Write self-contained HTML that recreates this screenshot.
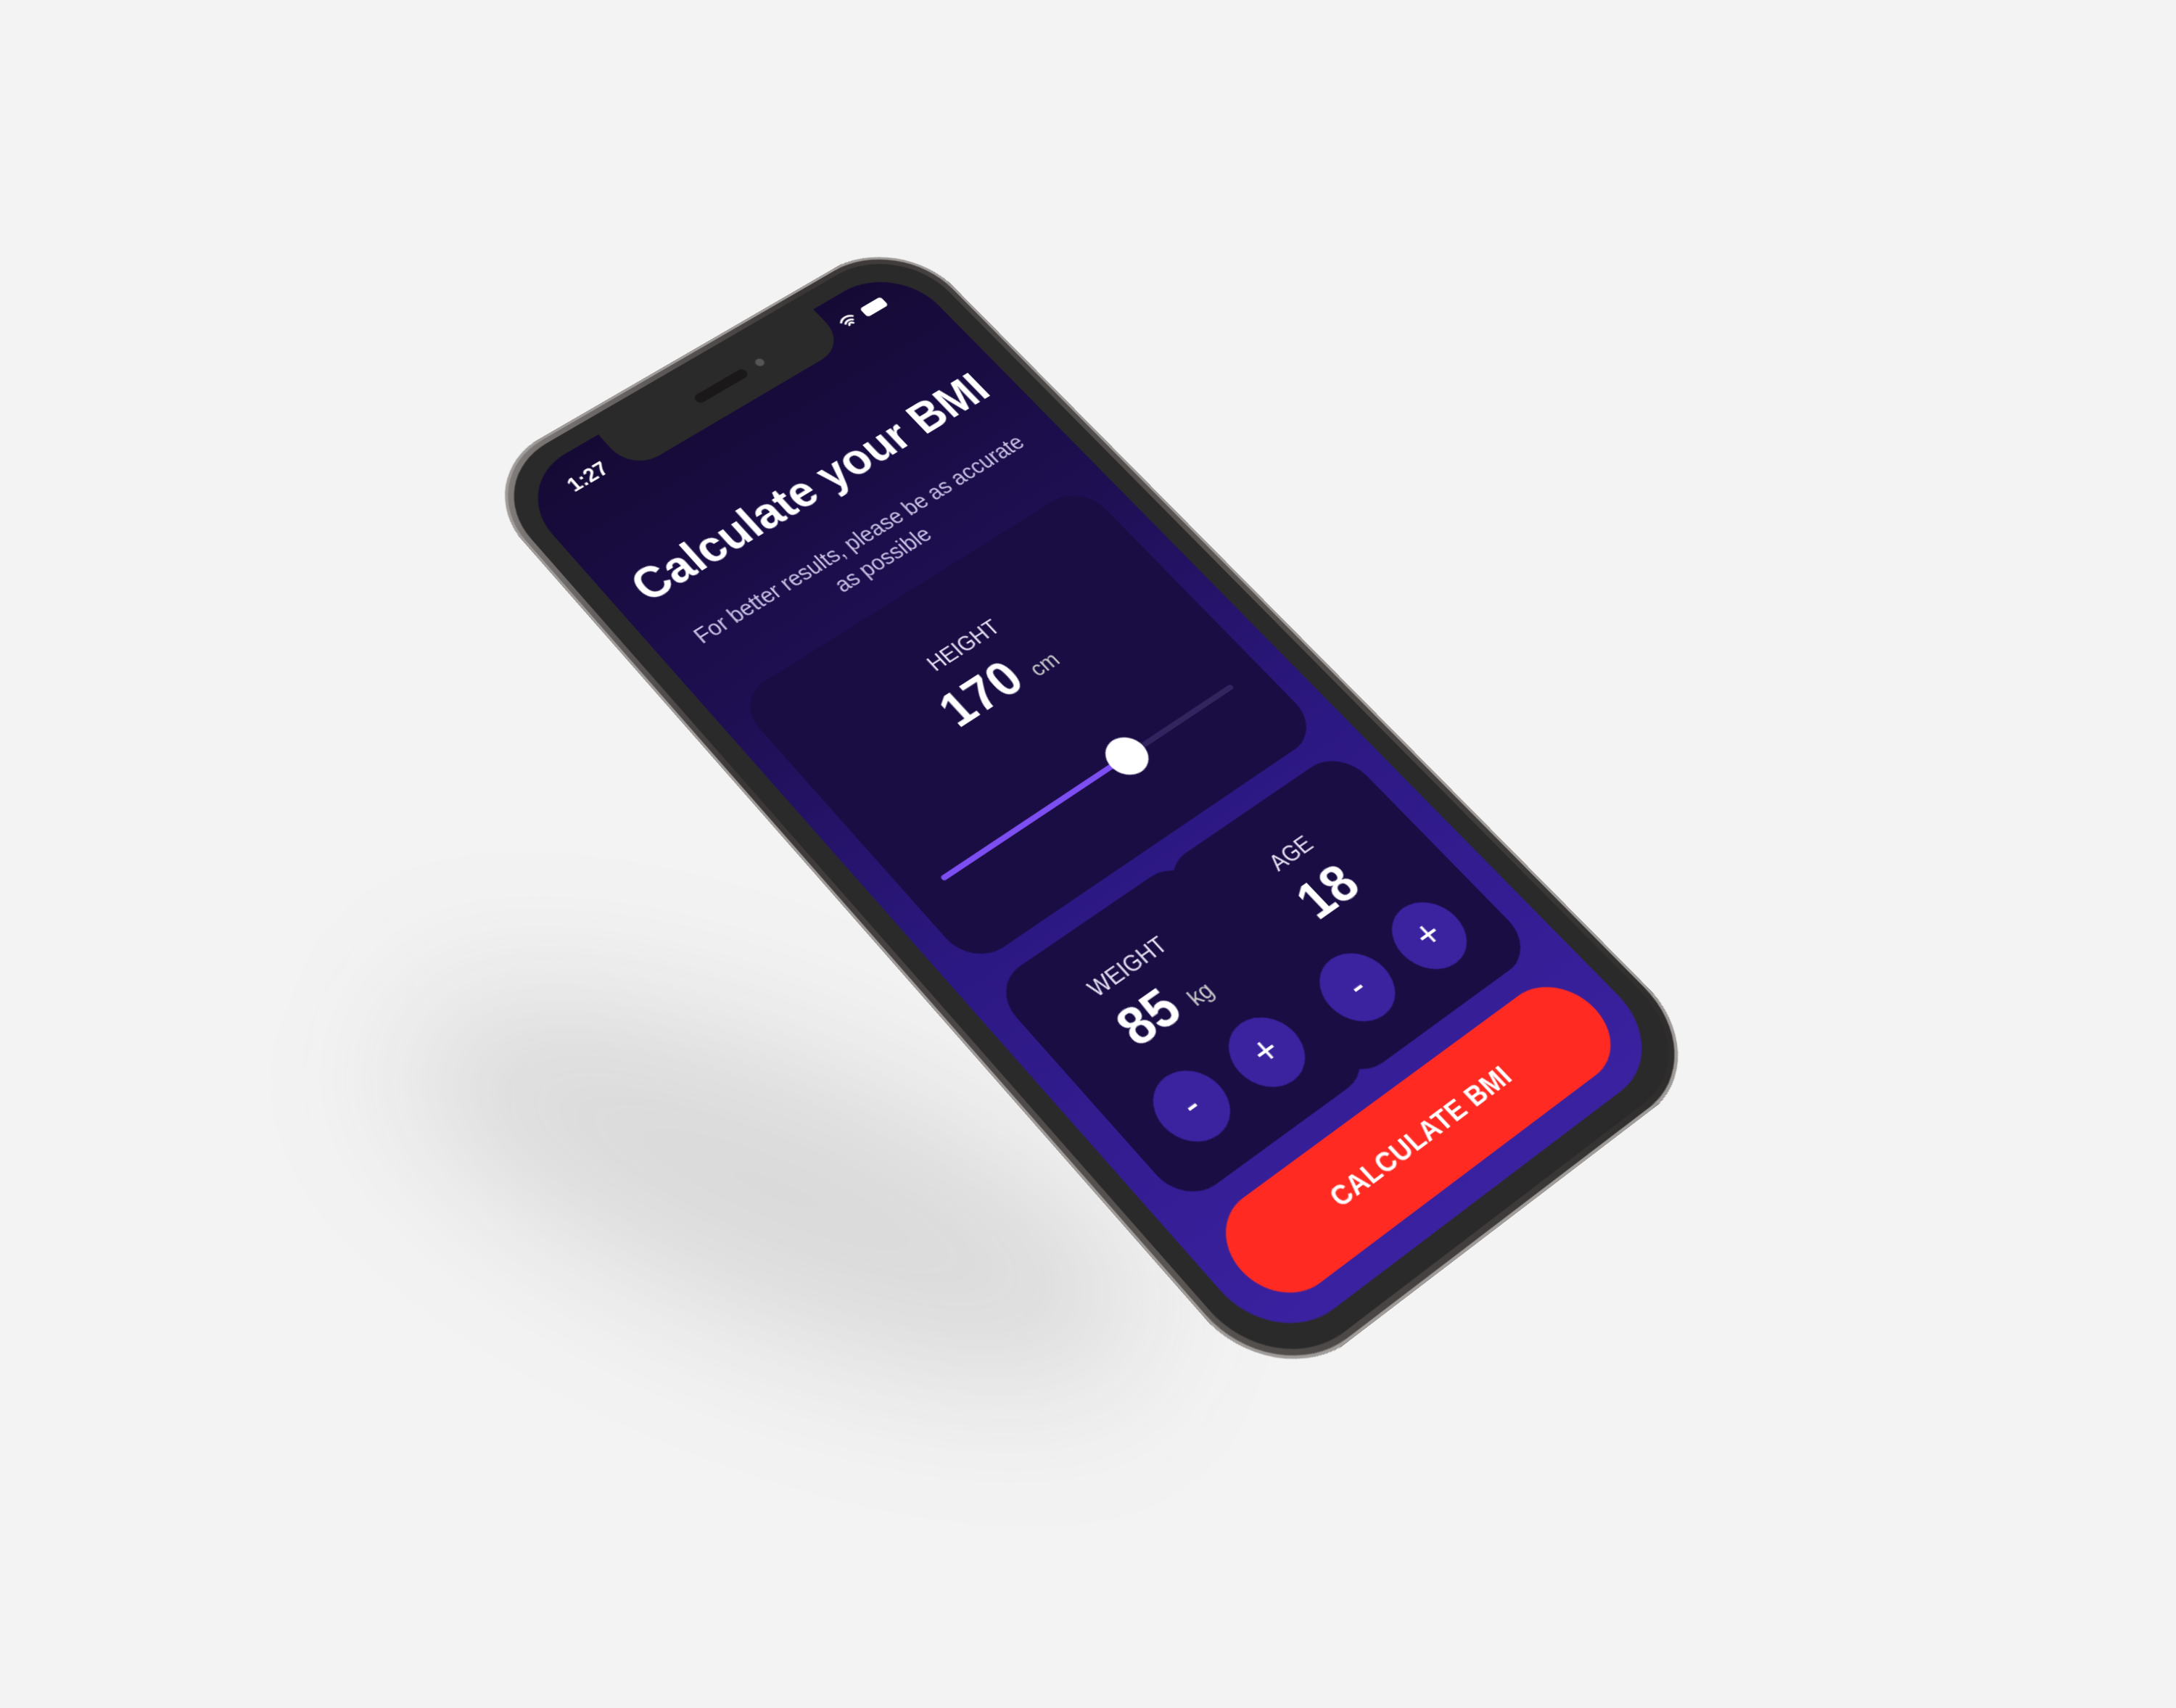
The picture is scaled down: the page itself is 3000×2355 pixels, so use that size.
<!DOCTYPE html>
<html><head><meta charset="utf-8"><style>
html,body{margin:0;padding:0;}
body{width:3000px;height:2250px;background:#f3f3f3;position:relative;overflow:hidden;font-family:"Liberation Sans",sans-serif;}
.shadow{position:absolute;left:520px;top:1460px;width:1100px;height:360px;border-radius:50%;background:rgba(80,80,80,0.16);filter:blur(100px);transform:rotate(22deg);}
.wrap{position:absolute;left:0;top:0;width:3000px;height:2250px;transform-origin:1502px 1110px;transform:translate(-4px,8px) scale(1.085);}
.phone{position:absolute;left:0;top:0;width:600px;height:1232px;transform-origin:0 0;
transform:matrix3d(1.02532,-0.49262,0,0.0000913,0.64305,0.74670,0,-0.00010805,0,0,1,0,717,689,0,1);
border-radius:96px;background:linear-gradient(135deg,#8a8684,#3a3636 25%,#5a5654 60%,#2a2828);box-shadow:0 0 0 3px #a09c9a inset;}
.bez{position:absolute;left:9px;top:9px;right:9px;bottom:9px;border-radius:88px;background:#2b2a2a;}
.screen{position:absolute;left:22px;top:22px;right:22px;bottom:22px;border-radius:74px;overflow:hidden;
background:linear-gradient(180deg,#150a35 0%,#1e0f52 30%,#2c1882 60%,#3a21a0 100%);color:#fff;}
.notch{position:absolute;left:50%;top:0;width:300px;height:58px;margin-left:-150px;background:#2b2a2a;border-radius:0 0 36px 36px;}
.time{position:absolute;left:52px;top:24px;font-size:24px;font-weight:bold;}
.stat{position:absolute;right:40px;top:24px;}
.title{position:absolute;left:0;right:0;top:150px;text-align:center;font-size:53px;font-weight:bold;}
.sub{position:absolute;left:40px;right:40px;top:244px;text-align:center;font-size:25px;color:#c9c2e6;line-height:34px;}
.card{position:absolute;background:#1a0d44;border-radius:40px;}
.lbl{position:absolute;left:0;right:0;text-align:center;font-size:24px;color:#e8e4f6;}
.val{position:absolute;left:0;right:0;text-align:center;font-size:56px;font-weight:bold;}
.val span{font-size:24px;font-weight:normal;color:#ccc;}
.btn{position:absolute;width:74px;height:74px;border-radius:50%;background:#3b23a0;color:#fff;font-size:40px;line-height:72px;text-align:center;}
.cta{position:absolute;left:30px;right:30px;top:1040px;height:104px;border-radius:52px;background:#ff2b22;text-align:center;line-height:104px;font-size:28px;font-weight:bold;letter-spacing:0.5px;}
</style></head><body>
<div class="shadow"></div>
<div class="wrap">
<div class="phone">
 <div class="bez">
  <div class="screen">
   <div class="notch"><div style="position:absolute;left:115px;top:18px;width:70px;height:12px;border-radius:6px;background:#1a1818;"></div><div style="position:absolute;left:200px;top:18px;width:10px;height:10px;border-radius:50%;background:#555;"></div></div>
   <div class="time">1:27</div>
   <div class="stat"><svg width="70" height="22"><path d="M4 8a12 12 0 0 1 18 0M7 12a8 8 0 0 1 12 0M10 16a3 3 0 0 1 6 0" stroke="#fff" stroke-width="2.5" fill="none"/><rect x="34" y="4" width="30" height="14" rx="4" fill="#fff"/></svg></div>
   <div class="title">Calculate your BMI</div>
   <div class="sub">For better results, please be as accurate<br>as possible</div>
   <div class="card" style="left:30px;right:30px;top:340px;height:370px;">
     <div class="lbl" style="top:70px;">HEIGHT</div>
     <div class="val" style="top:104px;">170 <span>cm</span></div>
     <div style="position:absolute;left:40px;right:40px;top:275px;height:6px;border-radius:3px;background:#32245e;"></div>
     <div style="position:absolute;left:40px;width:250px;top:275px;height:6px;border-radius:3px;background:#7d4ff2;"></div>
     <div style="position:absolute;left:268px;top:256px;width:44px;height:44px;border-radius:50%;background:#fff;"></div>
   </div>
   <div class="card" style="left:30px;width:255px;top:735px;height:280px;">
     <div class="lbl" style="top:48px;">WEIGHT</div>
     <div class="val" style="top:80px;">85 <span>kg</span></div>
     <div class="btn" style="left:40px;top:170px;">-</div>
     <div class="btn" style="left:140px;top:170px;">+</div>
   </div>
   <div class="card" style="right:30px;width:255px;top:735px;height:280px;">
     <div class="lbl" style="top:48px;">AGE</div>
     <div class="val" style="top:80px;">18</div>
     <div class="btn" style="left:40px;top:170px;">-</div>
     <div class="btn" style="left:140px;top:170px;">+</div>
   </div>
   <div class="cta">CALCULATE BMI</div>
  </div>
 </div>
</div>
</div>
</body></html>
